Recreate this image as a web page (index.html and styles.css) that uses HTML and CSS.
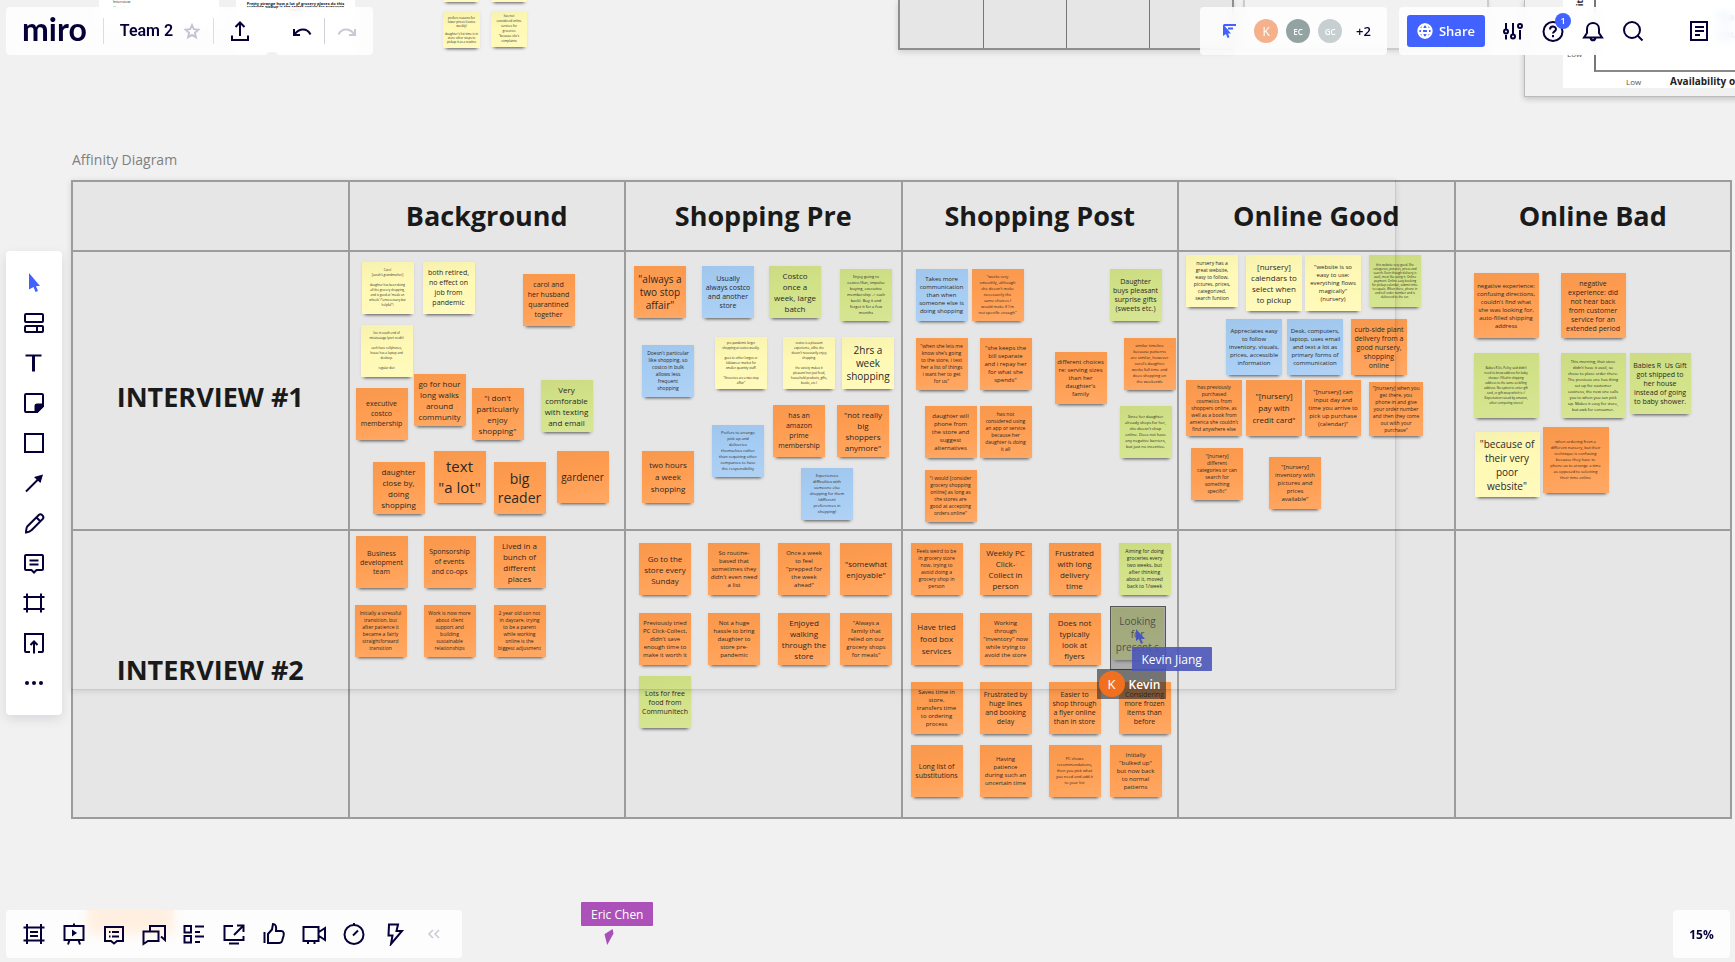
FILE: index.html
```html
<!DOCTYPE html>
<html lang="en">
<head>
<meta charset="utf-8">
<title>Team 2 – Miro</title>
<link rel="stylesheet" href="styles.css">
</head>
<body>
<main class="canvas">
  <!-- neighbouring board content, partly off-screen -->
  <div class="doc doc-a"><p>Interview</p><p class="green">Question</p></div>
  <div class="doc doc-b"><p>Pretty strange how a lot of grocery places do this</p><p>curbside pickup is the safest option for everyone</p><p>(really)</p></div>
  <div class="glow"></div>
  <div class="stray" id="stray"></div>
  <div class="grid-peek"><i></i><i></i><i></i><i></i></div>
  <div class="frame-peek"></div>
  <div class="chart">
    <div class="plot">
      <div class="axes"></div>
      <span class="yname">it</span>
      <span class="ylow">Low</span>
      <span class="blue">Start<br>young</span>
      <span class="xlow">Low</span>
      <span class="xname">Availability of time</span>
    </div>
  </div>

  <section class="affinity">
    <h1 class="frame-name">Affinity Diagram</h1>
    <div class="sheet">
      <table>
        <thead>
          <tr><td></td><th>Background</th><th>Shopping Pre</th><th>Shopping Post</th><th>Online Good</th><th>Online Bad</th></tr>
        </thead>
        <tbody>
          <tr class="first"><th>INTERVIEW #1</th><td></td><td></td><td></td><td></td><td></td></tr>
          <tr class="second"><th>INTERVIEW #2</th><td></td><td></td><td></td><td></td><td></td></tr>
        </tbody>
      </table>
      <div class="frame-edge"></div>
    </div>
  </section>

  <div class="cursor-label eric">Eric Chen</div>
  <svg class="eric-arrow" viewBox="0 0 12 20"><path d="M1 7 10 1l1 5-7 13z" fill="#a84fb8"/></svg>
</main>

<div class="ui">
  <header class="top">
    <div class="group">
      <div class="panel title-bar">
        <span class="logo">miro</span>
        <span class="rule"></span>
        <button class="team">Team 2</button>
        <button class="star" aria-label="Star board"><svg viewBox="0 0 24 24"><path d="m12 5.500 2 4.600 5 .5-3.800 3.300 1.100 4.900L12 16.200l-4.300 2.600 1.100-4.900L5 10.600l5-.5z"/></svg></button>
        <span class="rule"></span>
        <button class="icon export" aria-label="Export"><svg viewBox="0 0 24 24"><path d="M12 17V4M7.500 8 12 3.500 16.500 8M4 16.500V21h16v-4.500"/></svg></button>
      </div>
      <div class="panel history">
        <button class="icon" aria-label="Undo"><svg viewBox="0 0 24 24"><path d="M4 10v6h6M4.500 15.500C7 12 10 10.500 13 10.500c3 0 6 2 7.500 5"/></svg></button>
        <span class="rule"></span>
        <button class="icon muted" aria-label="Redo"><svg viewBox="0 0 24 24"><path d="M20 10v6h-6M19.500 15.500C17 12 14 10.500 11 10.500c-3 0-6 2-7.500 5"/></svg></button>
      </div>
    </div>
    <div class="group right">
      <div class="panel people">
        <button class="icon follow" aria-label="Hide cursors"><svg viewBox="0 0 24 24"><path d="M5 5v12l3-2 1.500 4 2-.8-1.500-3.700h3z" fill="#4262ff" stroke="none"/><path d="M6 6h12M10 9.500h5" stroke="#4262ff"/></svg></button>
        <span class="avatar k">K</span><span class="avatar ec">EC</span><span class="avatar gc">GC</span>
        <button class="more">+2</button>
      </div>
      <div class="panel actions">
        <button class="share"><svg viewBox="0 0 24 24"><circle cx="12" cy="12" r="10"/><ellipse cx="12" cy="12" rx="4.500" ry="10"/><path d="M2.500 9h19M2.500 15h19"/></svg>Share</button>
        <button class="icon" aria-label="Settings"><svg viewBox="0 0 24 24"><path d="M5 4v6m0 6v4.500M12 4v12M19 11v9.500"/><circle cx="5" cy="12.500" r="2"/><circle cx="12" cy="17.500" r="2"/><circle cx="19" cy="7" r="2"/></svg></button>
        <button class="icon help" aria-label="Help"><svg viewBox="0 0 24 24"><circle cx="12" cy="12.500" r="9.500"/><path d="M9 10.500C9 6.500 15 6.500 15 10.300c0 2-3 2.200-3 4.200M12 16v2.300"/></svg><span class="badge">1</span></button>
        <button class="icon" aria-label="Notifications"><svg viewBox="0 0 24 24"><path d="M3 18.500h18L18 14V10C18 2 6 2 6 10v4zM9.500 19c.5 3 4.500 3 5 0"/></svg></button>
        <button class="icon" aria-label="Search"><svg viewBox="0 0 24 24"><circle cx="11" cy="11" r="8"/><path d="m16.500 16.500 5 5"/></svg></button>
        <button class="icon notes" aria-label="Notes"><svg viewBox="0 0 24 24"><path d="M4 3h16v18H4zM8 8h9M8 12h9M8 16h5"/></svg></button>
      </div>
    </div>
  </header>

  <nav class="tools" aria-label="Tools">
    <button class="icon" aria-label="Select"><svg viewBox="0 0 24 24"><path d="M7 2v16.500l4.500-2.500 2 5 2.500-1-2-5H18z" fill="#4262ff" stroke="none"/></svg></button>
    <button class="icon" aria-label="Templates"><svg viewBox="0 0 24 24"><rect x="3" y="3" width="18" height="8" rx="1"/><rect x="3" y="15" width="18" height="6" rx="1"/><path d="M15 15v6"/></svg></button>
    <button class="icon" aria-label="Text"><svg viewBox="0 0 24 24"><path d="M3.500 4.500h16"/><path d="M11.500 4.500v16" stroke-width="3"/></svg></button>
    <button class="icon" aria-label="Sticky note"><svg viewBox="0 0 24 24"><path d="M4 3h16a1 1 0 0 1 1 1v11l-6 6H4a1 1 0 0 1-1-1V4a1 1 0 0 1 1-1z"/><path d="M21 13.500h-6a1.500 1.500 0 0 0-1.500 1.500v6H15l6-6z" fill="#050038"/></svg></button>
    <button class="icon" aria-label="Shape"><svg viewBox="0 0 24 24"><path d="M3 3h18v18H3z"/></svg></button>
    <button class="icon" aria-label="Connection line"><svg viewBox="0 0 24 24"><path d="M4 20.500 17 7.500"/><path d="M21 3.500 12 6l3 3 3.500 3z" fill="#050038" stroke="none"/></svg></button>
    <button class="icon" aria-label="Pen"><svg viewBox="0 0 24 24"><path d="M4 21.500c.2-3 .8-5.500 1.500-6.300L17 3.700c2-1.500 5.500 1.500 4 4L9.500 19.200C8.500 20.500 6.500 21.300 4 21.500zM14.500 6.500l4 4"/></svg></button>
    <button class="icon" aria-label="Comment"><svg viewBox="0 0 24 24"><path d="M4 4h16a1 1 0 0 1 1 1v13a1 1 0 0 1-1 1h-5.500L12 21.500 9.500 19H4a1 1 0 0 1-1-1V5a1 1 0 0 1 1-1zM7.500 9.500h9M7.500 13.500h9"/></svg></button>
    <button class="icon" aria-label="Frame"><svg viewBox="0 0 24 24"><path d="M5 2.500v19M19 2.500v19M1.500 6h21M1.500 18h21"/></svg></button>
    <button class="icon" aria-label="Upload"><svg viewBox="0 0 24 24"><path d="M8 21H4a1 1 0 0 1-1-1V3h18v17a1 1 0 0 1-1 1h-4M12 22.500V11M8.500 14l3.500-3.500 3.500 3.500"/></svg></button>
    <button class="icon" aria-label="More"><svg viewBox="0 0 24 24"><g fill="#050038" stroke="none"><circle cx="5" cy="12" r="2"/><circle cx="12" cy="12" r="2"/><circle cx="19" cy="12" r="2"/></g></svg></button>
  </nav>

  <footer class="bottom">
    <div class="panel collab">
      <button class="icon" aria-label="Frames"><svg viewBox="0 0 24 24"><path d="M5 2v20M19 2v20M1.500 5.500h21M1.500 18.500h21M8 10h8M8 14h8"/></svg></button>
      <button class="icon" aria-label="Presentation"><svg viewBox="0 0 24 24"><path d="M2.500 4h19v14h-19zM12 1.500V4M7.500 18 6 22.500M16.500 18l1.500 4.500"/><path d="m10 7.500 5 3.500-5 3.500z" fill="#050038" stroke="none"/></svg></button>
      <button class="icon" aria-label="Comments"><svg viewBox="0 0 24 24"><path d="M3 5h18v14h-6l-3 2.500L9 19H3zM7 10h1.500M10 10h7M7 14.500h1.500M10 14.500h7"/></svg></button>
      <button class="icon" aria-label="Chat"><svg viewBox="0 0 24 24"><path d="M8 9V4h15v14l-4-3.500M1.500 9.500h15v9.500H6l-4.500 3z"/></svg></button>
      <button class="icon" aria-label="Cards"><svg viewBox="0 0 24 24"><path d="M2.500 4H9v6.500H2.500zM2.500 14H9v6.500H2.500zM13 4.500h9M13 10h5M13 14.500h9M13 20h5"/></svg></button>
      <button class="icon" aria-label="Screen sharing"><svg viewBox="0 0 24 24"><path d="M11 4H2.500v14h19v-4M15 3.500h6.500V10M21 4l-9 9M7 21.500h10"/></svg></button>
      <button class="icon" aria-label="Voting"><svg viewBox="0 0 24 24"><path d="M2.500 10v11M6 21V12l4-4.500L11 2c3 0 3.500 3 3 7h5.500c2.500 0 2.500 3 2 5l-1.500 5c-.5 1.500-1 2-3 2z"/></svg></button>
      <button class="icon" aria-label="Video chat"><svg viewBox="0 0 24 24"><path d="M1.500 5h15v14h-15zM17 10l6-4v12l-6-4M6 19v3M12.500 19v3"/></svg></button>
      <button class="icon" aria-label="Timer"><svg viewBox="0 0 24 24"><circle cx="12" cy="12.500" r="9.500"/><path d="M12 1v2M11 13.500l5-5" /></svg></button>
      <button class="icon" aria-label="Apps"><svg viewBox="0 0 24 24"><path d="M7 2.500h9L14.500 9H20L9 22l1.500-8.500H6.500z"/></svg></button>
      <button class="icon muted" aria-label="Collapse"><svg viewBox="0 0 24 24"><path d="m11 8-4 4 4 4M17 8l-4 4 4 4" stroke-width="1.500"/></svg></button>
    </div>
    <button class="panel zoom">15%</button>
  </footer>
</div>
<script src="board.js"></script>
</body>
</html>
```
FILE: styles.css
```css
* { box-sizing: border-box; }
body {
  margin: 0;
  background: #f1f1f1;
  color: #1a1a1a;
  font-family: "Open Sans", "Noto Sans", sans-serif;
}
button { padding: 0; border: 0; background: none; color: inherit; font: inherit; cursor: pointer; }

/* canvas */
.canvas { position: relative; min-height: 100vh; overflow: hidden; }
.affinity { padding: 150px 3px 0 71px; }
.frame-name { margin: 0 0 10px 1px; color: #808080; font-size: 14px; line-height: 20px; font-weight: 400; }
.sheet { position: relative; }
table { width: 100%; border-collapse: collapse; table-layout: fixed; background: #e6e6e6; }
th, td { position: relative; padding: 0; border: 2px solid #9c9c9c; }
th { font-size: 27px; line-height: 36px; font-weight: 700; text-align: center; vertical-align: middle; }
thead tr { height: 70px; }
.first { height: 279px; }
.second { height: 288px; }
.first th { padding-top: 12px; }
.second th { padding-bottom: 8px; }
.frame-edge {
  position: absolute; top: 0; left: 0; z-index: 3;
  width: 79.8%; height: 510px;
  border-right: 1px solid rgba(0, 0, 0, .12); border-bottom: 1px solid rgba(0, 0, 0, .12);
  box-shadow: 0 1px 6px rgba(0, 0, 0, .12);
  pointer-events: none;
}

/* sticky notes */
.note {
  position: absolute;
  display: flex; align-items: center; justify-content: center;
  color: #2c2926; text-align: center; white-space: pre;
  background-image: linear-gradient(170deg, rgba(0, 0, 0, .03), rgba(255, 255, 255, 0) 45%, rgba(255, 255, 255, .12));
  box-shadow: 0 4px 3px -3px rgba(0, 0, 0, .6), 0 1px 3px rgba(0, 0, 0, .08);
}
.orange { background-color: #ff9d50; }
.yellow { background-color: #fff9b5; }
.green-note { background-color: #d2e287; }
.blue-note { background-color: #a5ccf3; }
.t4 { font-size: 3px; line-height: 4px; }
.t5 { font-size: 3px; line-height: 5px; }
.t6 { font-size: 4px; line-height: 6px; }
.t7 { font-size: 5px; line-height: 7px; }
.t8 { font-size: 6px; line-height: 8px; }
.t9 { font-size: 7px; line-height: 9px; }
.t10 { font-size: 7px; line-height: 10px; }
.t11 { font-size: 8px; line-height: 11px; }
.t12 { font-size: 8px; line-height: 12px; }
.t13 { font-size: 10px; line-height: 13px; }
.t14 { font-size: 10px; line-height: 14px; }
.t19 { font-size: 14px; line-height: 19px; }
.t21 { font-size: 15px; line-height: 21px; }

.locked {
  position: absolute; z-index: 4;
  width: 56px; height: 64px;
  border: 1px solid #555; background: rgba(115, 115, 115, .5);
}
.owner {
  position: absolute; z-index: 4;
  display: flex; align-items: center; gap: 4px;
  width: 69px; height: 30px; padding-left: 2px;
  background: rgba(40, 40, 40, .6); color: #fff;
  font-size: 12px; font-weight: 600;
}
.owner span {
  display: flex; align-items: center; justify-content: center;
  width: 26px; height: 26px; border-radius: 50%;
  background: #f0701f; font-size: 13px; font-weight: 400;
}
.cursor-label {
  position: absolute; z-index: 5;
  display: flex; align-items: center; justify-content: center;
  height: 24px; padding: 0 10px; border-radius: 1px;
  color: #fff; font-size: 12px; white-space: nowrap;
}
.kevin { background: rgba(75, 87, 184, .9); }
.kevin-arrow { position: absolute; z-index: 5; width: 12px; height: 16px; }
.eric { left: 581px; top: 902px; background: #ab51b9; }
.eric-arrow { position: absolute; left: 603px; top: 928px; width: 12px; height: 18px; }

/* neighbouring content */
.doc { position: absolute; top: 0; height: 26px; background: #fff; font-size: 4px; line-height: 5px; }
.doc p { margin: 0; }
.doc-a { left: 99px; width: 120px; padding-left: 14px; line-height: 4px; }
.green { padding-top: 2px; color: #2fa84f; }
.doc-b { left: 236px; width: 119px; height: 52px; padding-top: 2px; line-height: 3px; text-align: center; font-weight: 700; }
.glow { position: absolute; left: 87px; bottom: 28px; width: 87px; height: 24px; background: #ff9d40; }
.stray { position: absolute; left: 0; top: 0; }
.grid-peek {
  position: absolute; left: 898px; top: 0;
  display: grid; grid-template-columns: repeat(4, 1fr);
  width: 336px; height: 50px;
  border: 2px solid #8e8e8e; border-top: 0; background: #e6e6e6;
  box-shadow: 0 2px 6px rgba(0, 0, 0, .15);
}
.grid-peek i + i { border-left: 1px solid #777; }
.frame-peek {
  position: absolute; left: 1243px; top: 0; width: 246px; height: 50px;
  border: 2px solid #ccc; border-top: 0; box-shadow: 0 2px 4px rgba(0, 0, 0, .1);
}
.chart {
  position: absolute; left: 1524px; right: -40px; top: 0; height: 97px;
  border: 1px solid #bbb; border-top: 0; box-shadow: 0 2px 6px rgba(0, 0, 0, .2);
}
.plot { position: relative; height: 88px; margin-left: 38px; background: #fff; }
.plot span { position: absolute; color: #555; font-size: 8px; line-height: 12px; white-space: nowrap; }
.axes { position: absolute; left: 31px; right: 0; top: 0; height: 72px; border-left: 2px solid #777; border-bottom: 2px solid #888; }
.plot .yname { left: 14px; top: -3px; color: #222; font-weight: 700; transform: rotate(-90deg); }
.plot .ylow { left: 4px; top: 48px; }
.plot .xlow { left: 63px; top: 76px; }
.plot .xname { left: 107px; top: 75px; color: #222; font-size: 10px; font-weight: 700; }
.plot .blue { left: 154px; top: 8px; color: #2a62c9; font-size: 11px; line-height: 17px; font-weight: 700; }

/* interface chrome */
.ui {
  position: absolute; inset: 0; z-index: 10;
  display: flex; flex-direction: column; justify-content: space-between; align-items: flex-start;
  min-height: 640px; padding: 7px 5px 4px 6px;
  color: #050038; pointer-events: none;
}
.ui button { pointer-events: auto; }
.ui svg { display: block; width: 24px; height: 24px; fill: none; stroke: #050038; stroke-width: 2; }
.panel {
  display: flex; align-items: center; height: 48px;
  border-radius: 4px; background: rgba(255, 255, 255, .84);
  backdrop-filter: blur(6px);
}
.top, .bottom { display: flex; justify-content: space-between; width: 100%; }
.group { display: flex; gap: 8px; }
.right { gap: 12px; margin-right: -5px; }
.icon { position: relative; display: flex; align-items: center; justify-content: center; width: 40px; height: 40px; }
.rule { width: 1px; height: 26px; background: #dcdce4; }
.title-bar { padding: 0 8px 0 16px; }
.logo { margin-right: 16px; padding-bottom: 4px; font: 700 32px/40px Lato, sans-serif; }
.team { margin: 0 8px 0 16px; font: 600 16px/24px Roboto, Inter, sans-serif; }
.star svg { width: 22px; height: 22px; stroke: #c3c2cf; }
.star { margin-right: 10px; }
.export { margin-left: 6px; }
.history { padding: 0 4px; }
.history .icon { width: 44px; }
.history .rule { background: #d0d0d8; }
.ui .muted svg { stroke: #c9c9d4; }
.people { gap: 8px; padding: 0 16px; }
.follow { width: 28px; margin-right: 2px; }
.avatar {
  display: flex; align-items: center; justify-content: center;
  width: 24px; height: 24px; border-radius: 50%;
  color: #fff; font-size: 8px; font-weight: 600;
}
.k { background: #f5b18b; font-size: 12px; font-weight: 400; }
.ec { background: #93a3a2; }
.gc { background: #c8cfd0; }
.more { margin-left: 6px; font-size: 13px; font-weight: 600; }
.actions { padding: 0 16px 0 8px; border-radius: 4px 0 0 4px; }
.share {
  display: flex; align-items: center; gap: 6px;
  height: 32px; margin-right: 8px; padding: 0 10px;
  border-radius: 3px; background: #4262ff; color: #fff;
  font-size: 13px; font-weight: 600;
}
.ui .share svg { width: 16px; height: 16px; stroke: #fff; stroke-width: 3; }
.badge {
  position: absolute; right: 2px; top: 2px;
  width: 16px; height: 16px; border-radius: 50%;
  background: #4262ff; color: #fff; font-size: 9px; line-height: 16px; font-weight: 600;
}
.notes { margin-left: 26px; }
.tools {
  display: flex; flex-direction: column; align-items: center;
  width: 56px; padding: 12px 0;
  border-radius: 4px; background: #fff; box-shadow: 0 4px 12px rgba(5, 0, 56, .1);
}
.collab { padding: 0 8px; }
.zoom { justify-content: center; width: 57px; font-size: 12px; font-weight: 700; }
```
FILE: board.js
```javascript
// Each note: colour, x, y (board coordinates), size, text scale, lines.
const o = "orange", y = "yellow", g = "green-note", b = "blue-note";

const origins = { x: [350, 626, 903, 1179, 1456], y: [252, 531] };

const cells = [
  [
    [
      [y, 362, 262, 52, 5, "Carol|[sarah's grandmother]| |daughter has been doing|all the grocery shopping,|and is good at 'meals on|wheels' (\"unnecessary but|helpful\")"],
      [y, 423, 262, 52, 10, "both retired,|no effect on|job from|pandemic"],
      [o, 523, 274, 52, 10, "carol and|her husband|quarantined|together"],
      [y, 361, 325, 52, 5, "live in south end of|mississauga (port credit)| |each have cellphones,|house has a laptop and|desktop.| |regular diet"],
      [o, 356, 388, 52, 10, "executive|costco|membership"],
      [o, 414, 374, 52, 11, "go for hour|long walks|around|community"],
      [o, 472, 388, 52, 11, "\"i don't|particularly|enjoy|shopping\""],
      [g, 541, 380, 52, 11, "Very|comforable|with texting|and email"],
      [o, 373, 462, 52, 11, "daughter|close by,|doing|shopping"],
      [o, 434, 451, 52, 21, "text|\"a lot\""],
      [o, 494, 462, 52, 19, "big|reader"],
      [o, 557, 451, 52, 13, "gardener"]
    ],
    [
      [o, 634, 266, 52, 13, "\"always a|two stop|affair\""],
      [b, 702, 266, 52, 9, "Usually|always costco|and another|store"],
      [g, 769, 266, 52, 11, "Costco|once a|week, large|batch"],
      [g, 840, 269, 52, 6, "Enjoy going to|costco (fun, impulse|buying, executive|membership -> cash|back). Buy it and|forget it for a few|months"],
      [b, 642, 345, 52, 7, "Doesn't particular|like shopping, so|costco in bulk|allows less|frequent|shopping"],
      [y, 715, 337, 52, 5, "pre-pandemic larger|shopping at costco weekly.| |goes to either longos or|loblaws or market for|smaller quantity stuff.| |\"Groceries are a two stop|affair\""],
      [y, 783, 337, 52, 5, "costco is a pleasant|experience, altho she|doesn't necessarily enjoy|shopping.| |the variety makes it|pleasant (not just food,|household products, gifts,|books, etc.)"],
      [y, 842, 337, 52, 13, "2hrs a|week|shopping"],
      [b, 712, 425, 52, 6, "Prefers to arrange|pick up and|deliveries|themselves rather|than requiring other|companies to have|the responsibility"],
      [o, 773, 405, 52, 10, "has an|amazon|prime|membership"],
      [o, 837, 405, 52, 11, "\"not really|big|shoppers|anymore\""],
      [o, 642, 451, 52, 12, "two hours|a week|shopping"],
      [b, 801, 468, 52, 6, "Experiences|difficulties with|someone else|shopping for them|(different|preferences in|shopping)"]
    ],
    [
      [b, 916, 269, 52, 8, "Takes more|communication|than when|someone else is|doing shopping"],
      [o, 972, 269, 52, 6, "\"works very|smoothly, although|she doesn't make|necessarily the|same choices I|would make if I'm|not specific enough\""],
      [g, 1110, 269, 52, 9, "Daughter|buys pleasant|surprise gifts|(sweets etc.)"],
      [o, 916, 338, 52, 7, "\"when she lets me|know she's going|to the store, i text|her a list of things|i want her to get|for us\""],
      [o, 980, 338, 52, 8, "\"she keeps the|bill separate|and i repay her|for what she|spends\""],
      [o, 1055, 352, 52, 8, "different choices|re: serving sizes|than her|daughter's|family"],
      [o, 1124, 338, 52, 6, "similar timeline|because patterns|are similar, however|carol's daughter|works full time and|does shopping on|the weekends"],
      [o, 925, 406, 52, 8, "daughter will|phone from|the store and|suggest|alternatives"],
      [o, 980, 406, 52, 7, "has not|considered using|an app or service|because her|daughter is doing|it all"],
      [g, 1120, 406, 52, 6, "Since her daughter|already shops for her,|she doesn't shop|online. Does not have|any negative barriers,|but just no incentive."],
      [o, 925, 470, 52, 7, "\"i would [consider|grocery shopping|online] as long as|the stores are|good at accepting|orders online\""]
    ],
    [
      [y, 1186, 255, 52, 7, "nursery has a|great website,|easy to follow,|pictures, prices,|categorized,|search funtion"],
      [y, 1246, 255, 56, 11, "[nursery]|calendars to|select when|to pickup"],
      [y, 1305, 255, 56, 8, "\"website is so|easy to use:|everything flows|magically\"|(nursery)"],
      [g, 1369, 255, 52, 4, "this website very good. She|categories, pictures, prices and|search. Even though delivery is|avail, most like using it. Online|payment. Online easy booking|for pickup calendar, submit time.|to equals. When there, phone in|and tell order number and is|delivered to the car."],
      [b, 1226, 319, 56, 8, "Appreciates easy|to follow|inventory, visuals,|prices, accessible|information"],
      [b, 1287, 319, 56, 8, "Desk, computers,|laptop, uses email|and text a lot as|primary forms of|communication"],
      [o, 1351, 319, 56, 9, "curb-side plant|delivery from a|good nursery,|shopping|online"],
      [o, 1186, 380, 56, 7, "has previously|purchased|cosmetics from|shoppers online, as|well as a book from|america she couldn't|find anywhere else"],
      [o, 1246, 380, 56, 12, "\"[nursery]|pay with|credit card\""],
      [o, 1305, 380, 56, 8, "\"[nursery] can|input day and|time you arrive to|pick up purchase|(calendar)\""],
      [o, 1369, 382, 54, 7, "\"[nursery] when you|get there, you|phone in and give|your order number|and then they come|out with your|purchase\""],
      [o, 1191, 448, 52, 7, "\"[nursery]|different|categories or can|search for|something|specific\""],
      [o, 1269, 457, 52, 8, "\"[nursery]|inventory with|pictures and|prices|available\""]
    ],
    [
      [o, 1474, 273, 65, 8, "negative experience:|confusing directions,|couldn't find what|she was looking for,|auto-filled shipping|address"],
      [o, 1561, 273, 65, 9, "negative|experience: did|not hear back|from customer|service for an|extended period"],
      [g, 1474, 353, 65, 5, "Babies R Us. Policy said didn't|need to know address for baby|shower. Filled in shipping|address to the same as billing|address. No option to enter gift|card, or gift wrap which is :/|(Expectation raised by amazon,|other competing stores)"],
      [g, 1561, 353, 65, 6, "This morning, that store|didn't have it avail, so|chose to place order there.|The previous one has thing|set up for customer|easiness, the new one calls|you to when you can pick|up. Makes it easy for store,|but awk for consumer."],
      [g, 1630, 353, 61, 9, "Babies R  Us Gift|got shipped to|her house|instead of going|to baby shower."],
      [y, 1475, 432, 65, 14, "\"because of|their very|poor|website\""],
      [o, 1543, 427, 66, 6, "when ordering from a|different nursery, but their|technique is confusing|because they have to|phone us to arrange a time|as opposed to selecting|their time online"]
    ]
  ],
  [
    [
      [o, 356, 536, 52, 9, "Business|development|team"],
      [o, 424, 536, 52, 10, "Sponsorship|of events|and co-ops"],
      [o, 494, 536, 52, 11, "Lived in a|bunch of|different|places"],
      [o, 355, 605, 52, 7, "Initially a stressful|transition, but|after patience it|became a fairly|straightforward|transition"],
      [o, 424, 605, 52, 7, "Work is now more|about client|support and|building|sustainable|relationships"],
      [o, 494, 605, 52, 7, "2 year old son not|in daycare, trying|to be a parent|while working|online is the|biggest adjusment"]
    ],
    [
      [o, 639, 543, 52, 11, "Go to the|store every|Sunday"],
      [o, 708, 543, 52, 8, "So routine-|based that|sometimes they|didn't even need|a list"],
      [o, 778, 543, 52, 8, "Once a week|to feel|\"prepped for|the week|ahead\""],
      [o, 840, 543, 52, 11, "\"somewhat|enjoyable\""],
      [o, 639, 613, 52, 8, "Previously tried|PC Click-Collect,|didn't save|enough time to|make it worth it"],
      [o, 708, 613, 52, 8, "Not a huge|hassle to bring|daughter to|store pre-|pandemic"],
      [o, 778, 613, 52, 11, "Enjoyed|walking|through the|store"],
      [o, 840, 613, 52, 8, "\"Always a|family that|relied on our|grocery shops|for meals\""],
      [g, 639, 676, 52, 9, "Lots for free|food from|Communitech"]
    ],
    [
      [o, 911, 543, 52, 7, "Feels weird to be|in grocery store|now, trying to|avoid doing a|grocery shop in|person"],
      [o, 980, 543, 52, 11, "Weekly PC|Click-|Collect in|person"],
      [o, 1049, 543, 52, 11, "Frustrated|with long|delivery|time"],
      [g, 1119, 543, 52, 7, "Aiming for doing|groceries every|two weeks, but|after thinking|about it, moved|back to 1/week"],
      [o, 911, 613, 52, 12, "Have tried|food box|services"],
      [o, 980, 613, 52, 8, "Working|through|\"inventory\" now|while trying to|avoid the store"],
      [o, 1049, 613, 52, 11, "Does not|typically|look at|flyers"],
      [g, 1112, 608, 52, 13, "Looking|for|present s"],
      [o, 911, 682, 52, 8, "Saves time in|store,|transfers time|to ordering|process"],
      [o, 980, 682, 52, 9, "Frustrated by|huge lines|and booking|delay"],
      [o, 1049, 682, 52, 9, "Easier to|shop through|a flyer online|than in store"],
      [o, 1119, 682, 52, 9, "Considering|more frozen|items than|before"],
      [o, 911, 745, 52, 9, "Long list of|substitutions"],
      [o, 980, 745, 52, 8, "Having|patience|during such an|uncertain time"],
      [o, 1049, 745, 52, 6, "PC shows|recommendations,|then you pick what|you need and add it|to your list"],
      [o, 1110, 745, 52, 8, "Initially|\"bulked up\"|but now back|to normal|patterns"]
    ],
    [],
    []
  ]
];

function place(el, parent, x, yy) {
  el.style.left = x + "px";
  el.style.top = yy + "px";
  parent.appendChild(el);
}

function addNote(parent, ox, oy, [color, x, top, size, scale, text]) {
  const el = document.createElement("div");
  el.className = `note ${color} t${scale}`;
  el.style.width = el.style.height = size + "px";
  el.textContent = text.split("|").join("\n");
  place(el, parent, x - ox, top - oy);
}

document.querySelectorAll("tbody tr").forEach((row, r) => {
  row.querySelectorAll("td").forEach((cell, c) => {
    cells[r][c].forEach(note => addNote(cell, origins.x[c], origins.y[r], note));
  });
});

const stray = document.getElementById("stray");
[
  [y, 443, -34, 36, 4, " "],
  [y, 491, -34, 36, 4, " "],
  [y, 443, 11, 37, 4, "prefers reasons for|lower prices (costco|weekly)| |daughter's list time is in|store other stops to|pickup it as a routine"],
  [y, 491, 11, 36, 5, "has not|considered online|services for|groceries|\"because she's|complaints"]
].forEach(note => addNote(stray, 0, 0, note));

// Live selection by another participant.
const busy = document.querySelectorAll(".second td")[2];
[
  ["locked", 1110, 606, ""],
  ["owner", 1097, 669, "<span>K</span>Kevin"],
  ["cursor-label kevin", 1132, 647, "Kevin Jiang"]
].forEach(([cls, x, top, html]) => {
  const el = document.createElement("div");
  el.className = cls;
  el.innerHTML = html;
  place(el, busy, x - origins.x[2], top - origins.y[1]);
});
const arrow = document.createElement("div");
arrow.className = "kevin-arrow";
arrow.innerHTML = '<svg viewBox="0 0 12 16" width="12" height="16"><path d="M2 0v12l3-2 2 5 2-1-2-4h4z" fill="#4b57b8"/></svg>';
place(arrow, busy, 1134 - origins.x[2], 628 - origins.y[1]);
```
